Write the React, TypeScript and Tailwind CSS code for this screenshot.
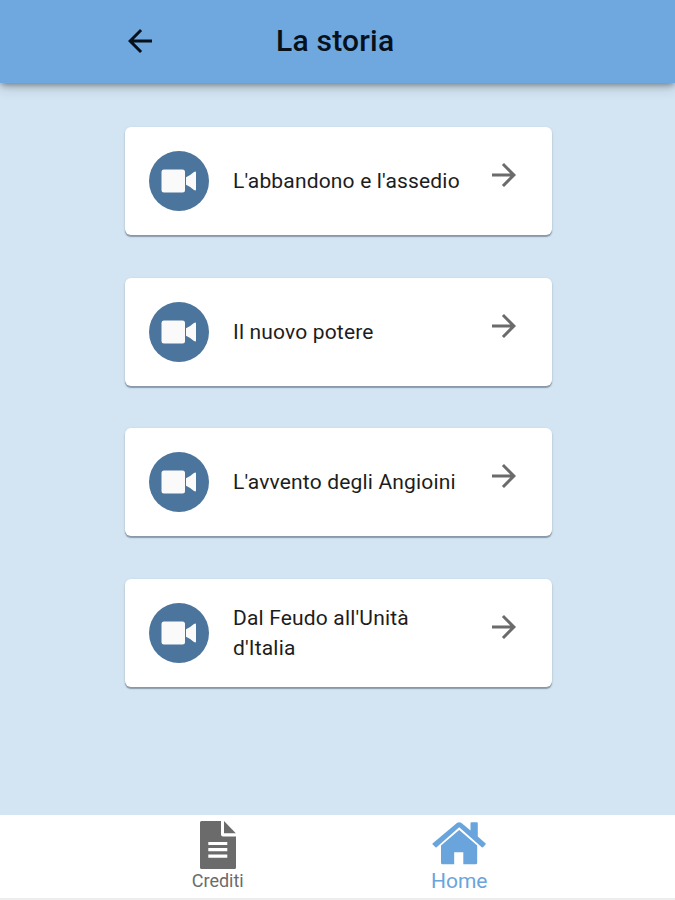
import React from 'react'

const chapters = [
    { id: 1, title: "L'abbandono e l'assedio" },
    { id: 2, title: "Il nuovo potere" },
    { id: 3, title: "L'avvento degli Angioini" },
    { id: 4, title: "Dal Feudo all'Unità d'Italia" },
]

export default function App() {
    return (
        <div className="flex h-[900px] w-[675px] flex-col overflow-hidden bg-[#d3e5f3] font-['Roboto',sans-serif]">
            {renderHeader()}
            {renderChapters()}
            {renderNavigation()}
        </div>
    )

    function renderHeader() {
        return (
            <header className="flex h-[83px] shrink-0 items-center bg-[#6fa8df] pb-0.5 pl-[122px] shadow-[0_3px_6px_-1px_rgba(0,0,0,0.35),0_5px_12px_rgba(0,0,0,0.16)]">
                <button aria-label="Indietro">
                    <ArrowBackIcon />
                </button>
                <h1 className="ml-[118px] text-[30px] leading-[48px] font-medium tracking-[0.22px] text-[#07111b]">La storia</h1>
            </header>
        )
    }

    function renderChapters() {
        return (
            <main className="flex flex-1 flex-col gap-[42.5px] pt-11 pl-[125px]">
                {chapters.map(chapter => <ChapterCard key={chapter.id} title={chapter.title} />)}
            </main>
        )
    }

    function renderNavigation() {
        return (
            <nav className="flex h-[85px] shrink-0 border-b-2 border-[#ededed] bg-white pr-[95px] pl-[97px]">
                <a className="flex flex-1 flex-col items-center pt-1.5 text-[#6b6b6b]">
                    <DocumentIcon />
                    <span className="text-[18px] leading-[23px]">Crediti</span>
                </a>
                <a className="flex flex-1 flex-col items-center pt-1.5 text-[#69a5dc]">
                    <HomeIcon />
                    <span className="text-[21px] leading-6">Home</span>
                </a>
            </nav>
        )
    }
}

function ChapterCard({ title }: { title: string }) {
    return (
        <article className="flex h-[108px] w-[427px] items-center rounded-[6px] bg-white px-6 shadow-[0_2px_1px_rgba(60,75,95,0.42),0_1px_3px_rgba(0,0,0,0.14)]">
            <div className="flex size-[60px] shrink-0 items-center justify-center rounded-full bg-[#4b759c]">
                <VideoIcon />
            </div>
            <p className="ml-6 w-[235px] text-[21px] leading-[30px] tracking-[0.17px] text-[#1d1d1d]">{title}</p>
            <ArrowForwardIcon />
        </article>
    )
}

function ArrowBackIcon() {
    return (
        <svg className="block size-9" viewBox="0 0 24 24" fill="#07111b">
            <path d="M20 11H7.83l5.59-5.59L12 4l-8 8 8 8 1.41-1.41L7.83 13H20v-2z" />
        </svg>
    )
}

function ArrowForwardIcon() {
    return (
        <svg className="mb-3 ml-[18px] size-9 shrink-0" viewBox="0 0 24 24" fill="#6b6b6b">
            <path d="M12 4l-1.41 1.41L16.17 11H4v2h12.17l-5.58 5.59L12 20l8-8z" />
        </svg>
    )
}

function VideoIcon() {
    return (
        <svg className="block h-6 w-9" viewBox="0 0 36 24" fill="#fafafa">
            <rect x="0.5" y="0.5" width="23.5" height="23" rx="2.5" />
            <path d="M25 8.2Q29.5 6.2 32.6 3.2Q35 1.6 35 3.6v16.8q0 2-2.4 0.4Q29.5 17.8 25 15.8z" />
        </svg>
    )
}

function DocumentIcon() {
    return (
        <svg className="block h-12 w-9" viewBox="0 0 36 48" fill="currentColor">
            <path fillRule="evenodd" d="M1.5 0H21v13.5q0 2 2 2h13V46.5q0 1.5-1.5 1.5h-33Q0 48 0 46.5v-45Q0 0 1.5 0zM8.3 21v3h19v-3zM8.3 27v3.3h19V27zM8.3 33.4v3.3h19v-3.3z" />
            <path d="M24 0L35.8 12.2H24z" />
        </svg>
    )
}

function HomeIcon() {
    return (
        <svg className="block h-12 w-[54px]" viewBox="0 0 54 48" fill="currentColor">
            <path d="M0.8 22.2L24.6 2.2Q27.2 0.2 29.8 2.2L38.5 9.5V2.3q0-1 1-1h5.3q1 0 1 1v13.3l7.6 6.6q0.7 0.6 0.1 1.3l-2.3 2.6q-0.6 0.7-1.4 0.1L27.2 6.2 4.6 26.2q-0.8 0.6-1.4-0.1L0.7 23.5q-0.6-0.7 0.1-1.3z" />
            <path d="M27.2 9l18 15.5v17.3q0 1.5-1.5 1.5H31.3v-12h-9.1v12H10.5q-1.5 0-1.5-1.5V24.5z" />
        </svg>
    )
}
